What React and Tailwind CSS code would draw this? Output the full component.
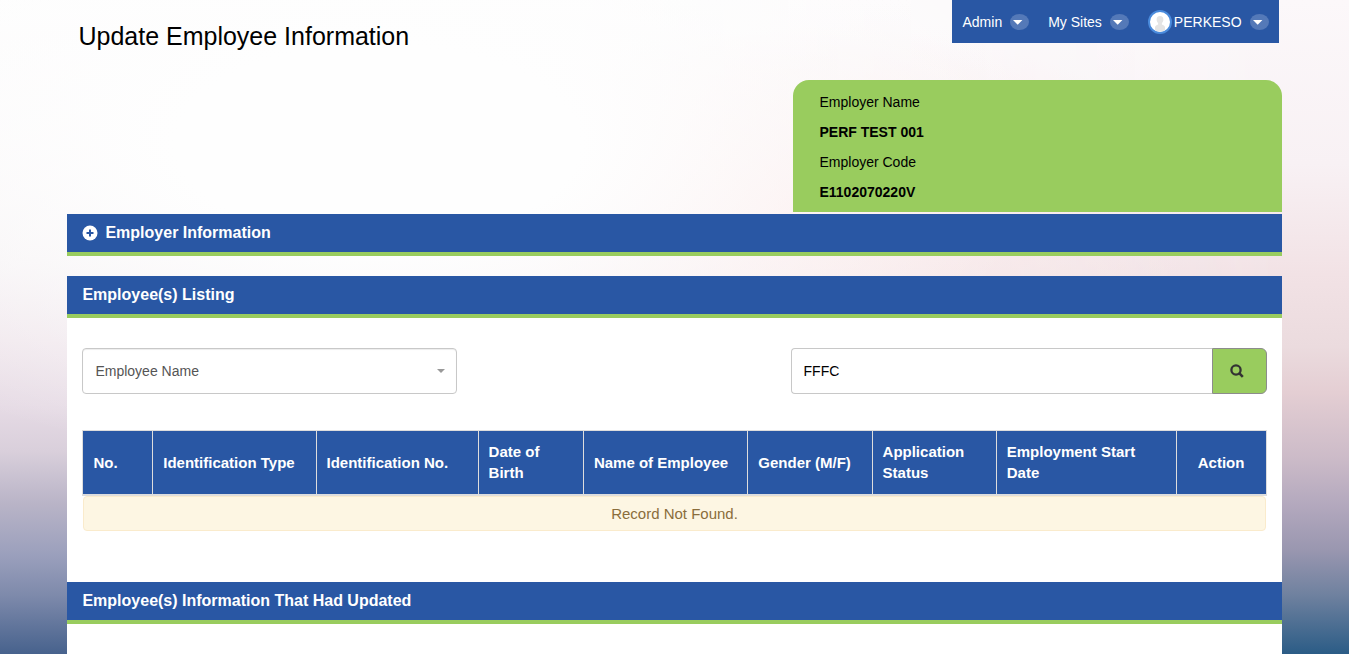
const columns = [
  { label: "No.", width: "w-[5.9%]" },
  { label: "Identification Type", width: "w-[13.8%]" },
  { label: "Identification No.", width: "w-[13.7%]" },
  { label: "Date of Birth", width: "w-[8.9%]" },
  { label: "Name of Employee", width: "w-[13.9%]" },
  { label: "Gender (M/F)", width: "w-[10.5%]" },
  { label: "Application Status", width: "w-[10.5%]" },
  { label: "Employment Start Date", width: "w-[15.2%]" },
  { label: "Action", width: "w-[7.6%]", center: true },
];

function CaretBadge() {
  return (
    <svg width="19" height="16" viewBox="0 0 19 16" aria-hidden="true">
      <ellipse cx="9.5" cy="8" rx="9.5" ry="8" fill="#5479b8" />
      <path d="M3 6h9.400L7.700 10.700z" fill="#fff" />
    </svg>
  );
}

function Avatar() {
  return (
    <svg width="24" height="24" viewBox="0 0 24 24" aria-hidden="true">
      <circle cx="12" cy="12" r="11" fill="#fff" stroke="#4a8bdc" strokeWidth="2" />
      <path
        d="M12 6c2.300 0 3.600 1.600 3.400 3.700-.1 1.500-.8 2.700-1.500 3.300v1.400c1.600.6 2.700 1.200 3.100 2.600v3c-1.400 1.200-3.200 1.600-5 1.600s-3.600-.4-5-1.600v-3c.4-1.400 1.500-2 3.100-2.600V13c-.7-.6-1.400-1.800-1.500-3.300C8.400 7.600 9.700 6 12 6z"
        fill="#e4e4e4"
      />
    </svg>
  );
}

function PlusCircle() {
  return (
    <svg width="16" height="16" viewBox="0 0 16 16" aria-hidden="true">
      <circle cx="8" cy="8" r="7.500" fill="#fff" />
      <path d="M8 4.500v7M4.500 8h7" stroke="#2957a4" strokeWidth="2" />
    </svg>
  );
}

function SearchIcon() {
  return (
    <svg width="14" height="14" viewBox="0 0 14 14" aria-hidden="true" fill="none" stroke="#333">
      <circle cx="6" cy="6" r="4.600" strokeWidth="2.300" />
      <path d="M9.200 9.200l3.600 3.600" strokeWidth="2.600" />
    </svg>
  );
}

function SectionBar({ children }) {
  return (
    <h2 className="h-[42px] border-b-4 border-[#99cc5e] bg-[#2957a4] px-[15px] text-base leading-[38px] font-bold text-white">
      {children}
    </h2>
  );
}

export default function App() {
  return (
    <div className="relative isolate min-h-screen bg-[linear-gradient(to_bottom,#fdfdfd_0%,#faf8f9_22%,#f5f1f3_40%,#efe5eb_52%,#e6dbe5_62%,#d9cfdb_69%,#b9b4c7_77%,#9a9fbc_85%,#7e8aab_91%,#47628d_100%)] font-['Liberation_Sans',Arial,sans-serif] text-sm text-black">
      <div className="absolute inset-0 -z-10 bg-[linear-gradient(to_bottom,#fcf8fa_0%,#f8f1f4_25%,#f2e2e5_42%,#ebdbde_53%,#e4ced3_60%,#ccbbc8_70%,#b4a9be_77%,#9a97b0_84%,#6f819f_91%,#2b5c86_100%)] [mask-image:linear-gradient(to_right,transparent_40%,black_95%)]" />
      <div className="absolute inset-0 -z-10 bg-[radial-gradient(ellipse_50%_50%_at_28%_22%,#fefefe_30%,transparent_100%),radial-gradient(ellipse_30%_28%_at_60%_32%,#fbeaea_0%,transparent_100%)]" />

      <div className="mx-[5%]">
        <header className="flex h-20 items-start justify-between pr-[3px] pl-[11px]">
          <h1 className="pt-5 text-[25px] leading-8">Update Employee Information</h1>
          <nav className="flex h-[43px] items-center gap-[19px] bg-[#2957a4] px-[10px] text-white">
            <button type="button" className="flex items-center gap-2">
              Admin
              <CaretBadge />
            </button>
            <button type="button" className="flex items-center gap-2">
              My Sites
              <CaretBadge />
            </button>
            <button type="button" className="flex items-center gap-2">
              <span className="flex items-center gap-[2px]">
                <Avatar />
                PERKESO
              </span>
              <CaretBadge />
            </button>
          </nav>
        </header>

        <dl className="mb-[2px] ml-auto w-[40.2%] rounded-t-2xl bg-[#99cc5e] px-[26px] pt-[7px] pb-[5px] leading-[30px]">
          <dt>Employer Name</dt>
          <dd className="font-bold">PERF TEST 001</dd>
          <dt>Employer Code</dt>
          <dd className="font-bold">E1102070220V</dd>
        </dl>

        <section className="mb-5">
          <SectionBar>
            <button type="button" className="flex items-center gap-[7px]">
              <PlusCircle />
              Employer Information
            </button>
          </SectionBar>
        </section>

        <main className="bg-white">
          <SectionBar>Employee(s) Listing</SectionBar>
          <div className="px-[15px] pt-[30px] pb-[51px]">
            <form className="mb-9 flex justify-between" onSubmit={(e) => e.preventDefault()}>
              <div className="relative w-[31.6%]">
                <select
                  aria-label="Search by"
                  defaultValue="name"
                  className="h-[46px] w-full appearance-none rounded border border-[#c8c8c8] bg-white px-3 text-[#555] shadow-[inset_0_1px_1px_rgba(0,0,0,0.075)]"
                >
                  <option value="name">Employee Name</option>
                </select>
                <svg
                  className="pointer-events-none absolute top-[21px] right-3"
                  width="8"
                  height="4"
                  viewBox="0 0 8 4"
                  aria-hidden="true"
                >
                  <path d="M0 0h8L4 4z" fill="#999" />
                </svg>
              </div>
              <div className="flex w-[40.2%]">
                <input
                  type="text"
                  aria-label="Search text"
                  defaultValue="FFFC"
                  className="h-[46px] min-w-0 flex-1 rounded-l border border-r-0 border-[#c8c8c8] bg-white px-3"
                />
                <button
                  type="submit"
                  aria-label="Search"
                  className="flex h-[46px] w-[55px] items-center justify-center rounded-r-md border border-[#8c8c8c] bg-[#99cc5e] pr-1"
                >
                  <SearchIcon />
                </button>
              </div>
            </form>

            <table className="w-full table-fixed border-collapse text-[15px]">
              <thead>
                <tr className="h-16">
                  {columns.map((c) => (
                    <th
                      key={c.label}
                      scope="col"
                      className={`${c.width} border border-b-2 border-[#ddd] bg-[#2957a4] px-[10px] leading-[21px] font-bold text-white ${c.center ? "text-center" : "text-left"}`}
                    >
                      {c.label}
                    </th>
                  ))}
                </tr>
              </thead>
              <tbody>
                <tr>
                  <td colSpan={columns.length} className="p-0">
                    <div className="h-[35px] rounded border border-[#faebcc] bg-[#fdf6e3] text-center leading-[34px] text-[#8a6d3b]">
                      Record Not Found.
                    </div>
                  </td>
                </tr>
              </tbody>
            </table>
          </div>
          <SectionBar>Employee(s) Information That Had Updated</SectionBar>
          <div className="h-[30px]" />
        </main>
      </div>
    </div>
  );
}
